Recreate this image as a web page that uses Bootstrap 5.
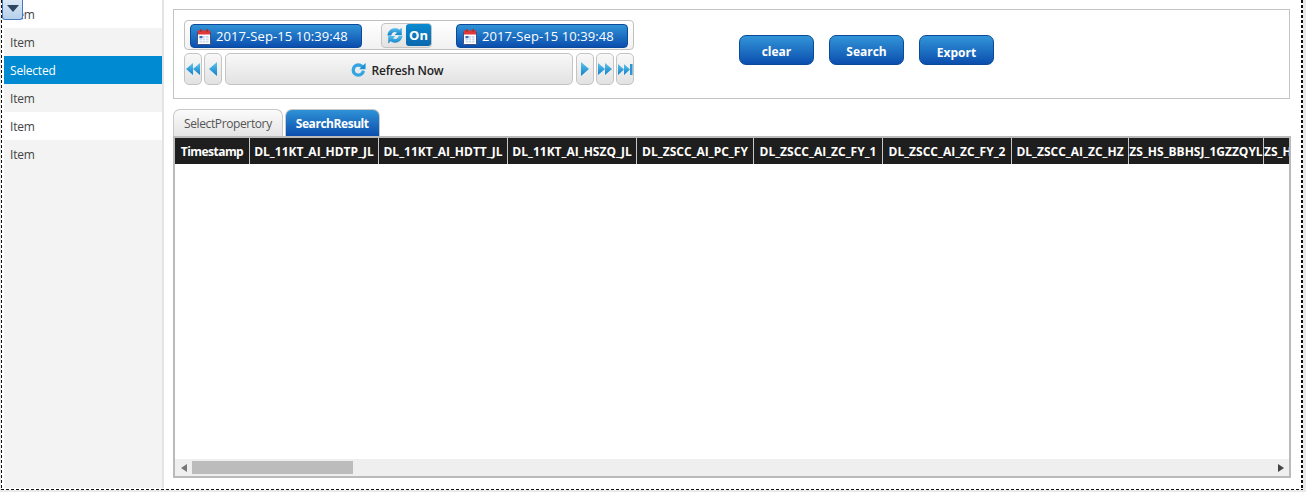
<!DOCTYPE html>
<html lang="en">
<head>
<meta charset="UTF-8">
<title>Search</title>
<link href="https://cdn.jsdelivr.net/npm/bootstrap@5.3.3/dist/css/bootstrap.min.css" rel="stylesheet">
<style>
  html, body { height: 100%; }
  body { background: #e9e9e9; font-family: "Open Sans", "Liberation Sans", sans-serif; font-size: 12px; color: #444; overflow: hidden; }
  .frame { width: 1302px; height: 490px; margin-left: 1px; position: relative; padding: 0 2px 2px 3px;
    background:
      repeating-linear-gradient(#111 0 3px, transparent 3px 5px) left top / 1px 100% no-repeat,
      repeating-linear-gradient(#111 0 3px, transparent 3px 5px) right top / 2px 100% no-repeat,
      repeating-linear-gradient(90deg, #111 0 3px, transparent 3px 5px) left bottom / 100% 1px no-repeat,
      #fff; }
  .drop-toggle { position: absolute; z-index: 5; left: 1px; top: 0; width: 21px; height: 20px; border: 1px solid #4a78c0; border-top: 0; border-radius: 0 0 3px 3px; background: linear-gradient(#dbe8f5, #b6d0ea); padding: 5px 0 0; display: flex; align-items: flex-start; justify-content: center; }
  .side { width: 160px; background: #f3f3f3; border-right: 2px solid #e4e4e4; flex: none; }
  .side .side-item { height: 28px; line-height: 30px; padding: 0 6px; margin: 0; border: 0; border-radius: 0; background: #f3f3f3; color: #444; letter-spacing: -.2px; }
  .side .side-item.alt { background: #fff; }
  .side .side-item.active { background: #008ad2; color: #fff; margin-top: 0; }
  .main-pane { padding: 9px 11px 0 9px; min-width: 0; }
  .filter-box { height: 90px; border: 1px solid #c4c4c4; padding: 10px; margin-bottom: 10px; }
  .picker { width: 450px; }
  .range-row { height: 30px; border: 1px solid #c0c0c0; border-radius: 4px; background: linear-gradient(#fff, #f1f1f1); padding: 3px 5px 0; margin-bottom: 3px; }
  .date-btn { width: 172px; height: 24px; border: 1px solid #0b4a9a; border-radius: 4px; background: linear-gradient(#2f92d6, #0b4eae); color: #fff; padding: 1px 0 0 6px; gap: 5px; font-size: 13px; letter-spacing: .08px; }
  .sync-box { width: 51px; height: 25px; margin: -1px 24px 0 19px; border: 1px solid #c4c4c4; border-radius: 4px; background: linear-gradient(#f6f6f6, #e2e2e2); padding: 0 0 1px 5px; }
  .on-pill { width: 25px; height: 22px; border-radius: 3px; background: linear-gradient(#0a8ad0, #0b67ad); color: #fff; font-weight: 700; line-height: 22px; text-align: center; font-size: 13px; }
  .step-row { height: 32px; gap: 2px; }
  .step-btn { width: 18px; height: 32px; padding: 0; border: 1px solid #c4c4c4; border-radius: 5px; background: linear-gradient(#f8f8f8, #e2e2e2); display: flex; align-items: center; justify-content: center; }
  .refresh-btn { flex: 1; margin: 0 1px; height: 32px; padding: 3px 4px 0 0; border: 1px solid #c4c4c4; border-radius: 5px; background: linear-gradient(#f8f8f8, #e2e2e2); color: #222; font-size: 12px; font-weight: 600; gap: 6px; letter-spacing: -.2px; }
  .refresh-btn svg { margin-top: -3px; }
  .blue-btn { width: 75px; height: 30px; padding: 4px 0 0; border: 1px solid #0b4a9a; border-radius: 7px; background: linear-gradient(#3295d8, #0b4eae); color: #fff; font-weight: 700; font-size: 12px; line-height: 20px; }
  .blue-btn.low { padding-top: 6px; }
  .action-group { margin: 15px 0 0 105px; gap: 15px; }
  .tab-strip { height: 27px; border: 0; gap: 2px; }
  .tab-strip .nav-link { height: 27px; padding: 0 10px; line-height: 27px; font-size: 12px; color: #555; border: 1px solid #c8c8c8; border-bottom: 0; border-radius: 7px 7px 0 0; background: linear-gradient(#fbfbfb, #e4e4e4); margin: 0; letter-spacing: -.38px; }
  .tab-strip .nav-link.active { color: #fff; font-weight: 700; letter-spacing: -.45px; border-color: #c8c8c8; background: linear-gradient(#2f92d6, #0b4eae); }
  .grid-frame { width: 1118px; height: 342px; border: 2px solid #bababa; }
  .grid-body { min-height: 0; overflow: hidden; }
  .result-table { table-layout: fixed; width: 1114px; margin: 0; border-collapse: separate; border-spacing: 0; }
  .result-table th { height: 26px; padding: 1px 0 0; background: #1e1e1e; color: #fff; font-size: 12px; font-weight: 700; text-align: center; vertical-align: middle; white-space: nowrap; overflow: hidden; border: 0; border-right: 1px solid #c8c8c8; box-shadow: none; }
  .result-table th:last-child { border-right: 0; text-align: left; }
  .result-table th.stamp { letter-spacing: -.55px; }
  .w75 { width: 75px; } .w129 { width: 129px; } .w117 { width: 117px; } .w135 { width: 135px; } .w26 { width: 26px; }
  .h-scroll { height: 17px; background: #efefef; padding: 2px 5px 2px 6px; }
  .h-thumb { width: 161px; height: 13px; background: #bcbcbc; margin-left: 5px; }
</style>
</head>
<body>
<svg width="0" height="0" class="d-block position-absolute">
  <defs>
    <linearGradient id="cyanFill" x1="0" y1="0" x2="0" y2="1"><stop offset="0" stop-color="#5cc4ee"/><stop offset="1" stop-color="#1180c8"/></linearGradient>
    <symbol id="cal" viewBox="0 0 14 16">
      <rect x=".5" y="2" width="13" height="13.5" rx="1" fill="#fff" stroke="#45507e"/>
      <rect x="1" y="1.5" width="12" height="4" fill="#e0383a"/>
      <rect x="3" y="0" width="1.5" height="3" fill="#a32"/><rect x="9.5" y="0" width="1.5" height="3" fill="#a32"/>
      <path d="M2.5 7h9v6.5h-9z" fill="#c9d8ee"/>
      <path d="M2.5 9.2h9M2.5 11.4h9M5.5 7v6.5M8.5 7v6.5" stroke="#fff" stroke-width=".7"/>
      <rect x="2.5" y="7" width="3" height="2.2" fill="#3b6cc0"/>
    </symbol>
    <symbol id="sync" viewBox="0 0 16 16">
      <path d="M.5 8C.8 3.500 4 .8 8 .8c1.800 0 3.200.5 4.300 1.400L14.800 0v7.400H7.600l2.300-2.200C9.300 4.800 8.700 4.600 8 4.600 6 4.600 4.600 5.900 4.300 8z" fill="url(#cyanFill)"/>
      <path d="M15.500 8c-.3 4.500-3.500 7.200-7.500 7.200-1.800 0-3.200-.5-4.300-1.400L1.200 16V8.600h7.200l-2.300 2.200c.6.400 1.200.6 1.900.6 2 0 3.400-1.300 3.700-3.400z" fill="url(#cyanFill)"/>
    </symbol>
    <symbol id="reload" viewBox="0 0 16 16">
      <circle cx="7.800" cy="8.600" r="5.400" fill="none" stroke="#35a5e2" stroke-width="3.600"/>
      <path d="M8 8.600L16 5v4.500z" fill="#f0f0f0"/>
      <path d="M15.500 1v6.800H8.700z" fill="#1d90d4"/>
    </symbol>
  </defs>
</svg>

<div class="frame d-flex">
  <button class="drop-toggle" type="button" aria-label="Open">
    <svg width="12" height="7" viewBox="0 0 12 7"><path d="M0 0h12L6 7z" fill="#2f4560"/></svg>
  </button>

  <div class="side list-group list-group-flush">
    <div class="list-group-item side-item alt">Item</div>
    <div class="list-group-item side-item">Item</div>
    <div class="list-group-item side-item active">Selected</div>
    <div class="list-group-item side-item">Item</div>
    <div class="list-group-item side-item alt">Item</div>
    <div class="list-group-item side-item">Item</div>
  </div>

  <div class="main-pane flex-grow-1">
    <div class="filter-box d-flex">
      <div class="picker">
        <div class="range-row d-flex align-items-start">
          <button class="btn date-btn d-flex align-items-center" type="button">
            <svg width="14" height="16"><use href="#cal"/></svg>2017-Sep-15 10:39:48
          </button>
          <div class="sync-box d-flex align-items-center justify-content-between">
            <svg width="16" height="17"><use href="#sync"/></svg>
            <span class="on-pill">On</span>
          </div>
          <button class="btn date-btn d-flex align-items-center" type="button">
            <svg width="14" height="16"><use href="#cal"/></svg>2017-Sep-15 10:39:48
          </button>
        </div>
        <div class="step-row d-flex">
          <button class="step-btn" type="button" aria-label="First"><svg width="14" height="12" viewBox="0 0 14 12"><path d="M7 0v12L0 6zM14 0v12L7 6z" fill="url(#cyanFill)"/></svg></button>
          <button class="step-btn" type="button" aria-label="Previous"><svg width="8" height="14" viewBox="0 0 8 14"><path d="M8 0v14L0 7z" fill="url(#cyanFill)"/></svg></button>
          <button class="btn refresh-btn d-flex align-items-center justify-content-center" type="button">
            <svg width="15" height="15"><use href="#reload"/></svg>Refresh Now
          </button>
          <button class="step-btn" type="button" aria-label="Next"><svg width="8" height="14" viewBox="0 0 8 14"><path d="M0 0v14l8-7z" fill="url(#cyanFill)"/></svg></button>
          <button class="step-btn" type="button" aria-label="Forward"><svg width="14" height="12" viewBox="0 0 14 12"><path d="M0 0v12l7-6zM7 0v12l7-6z" fill="url(#cyanFill)"/></svg></button>
          <button class="step-btn" type="button" aria-label="Last"><svg width="15" height="11" viewBox="0 0 15 11"><path d="M0 0v11l6-5.500zM6 0v11l6-5.500z" fill="url(#cyanFill)"/><rect x="12" width="2.500" height="11" fill="#2a96d6"/></svg></button>
        </div>
      </div>
      <div class="action-group d-flex align-items-start">
        <button class="btn blue-btn" type="button">clear</button>
        <button class="btn blue-btn" type="button">Search</button>
        <button class="btn blue-btn low" type="button">Export</button>
      </div>
    </div>

    <ul class="nav nav-tabs tab-strip">
      <li class="nav-item"><a class="nav-link" href="#">SelectPropertory</a></li>
      <li class="nav-item"><a class="nav-link active" href="#">SearchResult</a></li>
    </ul>

    <div class="grid-frame d-flex flex-column">
      <div class="grid-body flex-grow-1">
        <table class="table result-table">
          <thead>
            <tr>
              <th class="w75 stamp">Timestamp</th>
              <th class="w129">DL_11KT_AI_HDTP_JL</th>
              <th class="w129">DL_11KT_AI_HDTT_JL</th>
              <th class="w129">DL_11KT_AI_HSZQ_JL</th>
              <th class="w117">DL_ZSCC_AI_PC_FY</th>
              <th class="w129">DL_ZSCC_AI_ZC_FY_1</th>
              <th class="w129">DL_ZSCC_AI_ZC_FY_2</th>
              <th class="w117">DL_ZSCC_AI_ZC_HZ</th>
              <th class="w135">ZS_HS_BBHSJ_1GZZQYL</th>
              <th class="w26">ZS_HS</th>
            </tr>
          </thead>
        </table>
      </div>
      <div class="h-scroll d-flex align-items-center">
        <svg width="6" height="8" viewBox="0 0 6 8"><path d="M6 0v8L0 4z" fill="#777"/></svg>
        <div class="h-thumb"></div>
        <svg class="ms-auto" width="6" height="8" viewBox="0 0 6 8"><path d="M0 0v8l6-4z" fill="#444"/></svg>
      </div>
    </div>
  </div>
</div>
<script src="https://cdn.jsdelivr.net/npm/bootstrap@5.3.3/dist/js/bootstrap.bundle.min.js"></script>
</body>
</html>
